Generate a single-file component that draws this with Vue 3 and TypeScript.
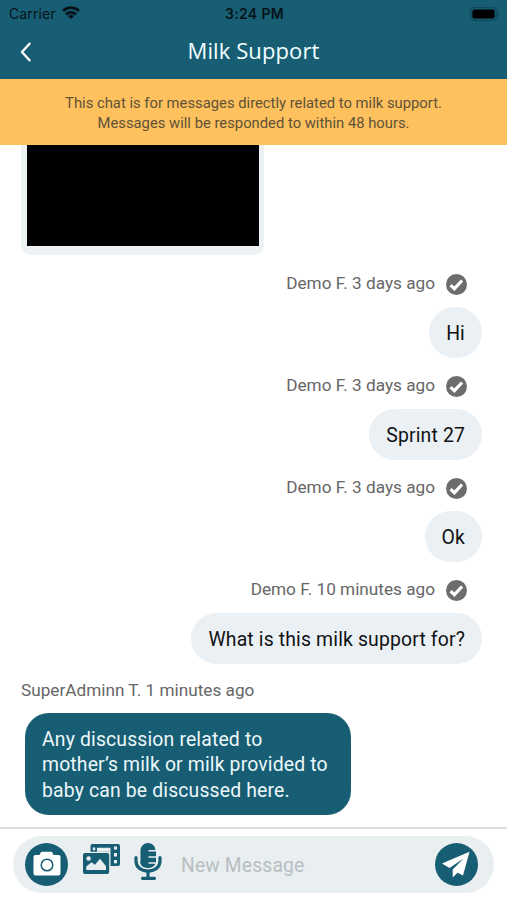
<script setup lang="ts">
interface Message {
  id: number
  author: string
  time: string
  text: string
}

const sent: Message[] = [
  { id: 1, author: 'Demo F.', time: '3 days ago', text: 'Hi' },
  { id: 2, author: 'Demo F.', time: '3 days ago', text: 'Sprint 27' },
  { id: 3, author: 'Demo F.', time: '3 days ago', text: 'Ok' },
  { id: 4, author: 'Demo F.', time: '10 minutes ago', text: 'What is this milk support for?' },
]
</script>

<template>
  <div class="screen">
    <header class="header">
      <div class="status">
        <div class="carrier">
          <span>Carrier</span>
          <svg class="wifi" viewBox="0 0 18 13" width="18" height="13">
            <g fill="none" stroke="#061318" stroke-width="2.8">
              <path d="M1 5a11.3 11.3 0 0 1 16 0" />
              <path d="M4 8.4a7.1 7.1 0 0 1 10 0" />
            </g>
            <path d="M6 10.2a4.4 4.4 0 0 1 6 0L9 13z" fill="#061318" />
          </svg>
        </div>
        <span class="clock">3:24 PM</span>
        <svg class="battery" viewBox="0 0 30 14" width="30" height="14">
          <rect x="0.7" y="0.7" width="25.6" height="12.6" rx="3.5" fill="none" stroke="#10495a" stroke-width="1.2" />
          <rect x="2.4" y="2.4" width="22.2" height="9.2" rx="1.8" fill="#000" />
          <path d="M27.6 4.7c1.8.6 1.8 4 0 4.6z" fill="#10495a" />
        </svg>
      </div>
      <div class="nav">
        <svg class="back" viewBox="0 0 12 20" width="12" height="20">
          <path d="M9.500 1.700 2 10l7.500 8.300" fill="none" stroke="#fff" stroke-width="2.400" stroke-linecap="round" stroke-linejoin="round" />
        </svg>
        <h1 class="title">Milk Support</h1>
      </div>
    </header>

    <div class="notice">
      <p>This chat is for messages directly related to milk support.</p>
      <p>Messages will be responded to within 48 hours.</p>
    </div>

    <main class="chat">
      <div class="media"><div class="video"></div></div>

      <section v-for="m in sent" :key="m.id" class="sent">
        <div class="meta">
          <span>{{ m.author }} {{ m.time }}</span>
          <svg viewBox="0 0 20 20" width="21" height="21">
            <circle cx="10" cy="10" r="10" fill="#6d6d6d" />
            <path d="m4.300 10.500 3.700 3.500 7.300-7.800" fill="none" stroke="#fff" stroke-width="3" />
          </svg>
        </div>
        <div class="bubble">{{ m.text }}</div>
      </section>

      <section class="received">
        <div class="meta"><span>SuperAdminn T. 1 minutes ago</span></div>
        <div class="bubble reply">Any discussion related to<br />mother’s milk or milk provided to<br />baby can be discussed here.</div>
      </section>
    </main>

    <footer class="footer">
      <div class="composer">
        <svg class="camera" viewBox="0 0 43 43" width="43" height="43">
          <circle cx="21.5" cy="21.5" r="21.5" fill="#175e74" />
          <path d="M10.500 12h4l1.200-2.500q.4-.8 1.200-.8h9.200q.8 0 1.200.8l1.200 2.500h5q2 0 2 2v16.500q0 2-2 2h-23q-2 0-2-2v-16.500q0-2 2-2z" fill="#fff" />
          <circle cx="22" cy="22" r="5.800" fill="none" stroke="#175e74" stroke-width="1.500" />
        </svg>
        <svg class="gallery" viewBox="0 0 38 31" width="38" height="31">
          <path d="M9.500 0H35q2 0 2 2v18q0 2-2 2h-7.500V7.800H7.500V2q0-2 2-2z" fill="#175e74" />
          <path d="M14 3.800h13.500v4H14zM9.800 3.500h2.400v2.700H9.800zM31 2.600h3v3h-3zM31 9h3v3.500h-3zM31 16h3v3.200h-3z" fill="#e9eef1" />
          <rect x="0" y="9" width="26.200" height="21" rx="2" fill="#175e74" />
          <circle cx="5.600" cy="14.500" r="2.200" fill="#e9eef1" />
          <path d="M3.300 26v-3.500l5.200-4.300 3.500 2.500 5-6 6 7.500V26z" fill="#e9eef1" />
        </svg>
        <svg class="mic" viewBox="0 0 28 38" width="28" height="38">
          <path d="M6.500 8a7.500 7.500 0 0 1 15-1h-7v1.600h7.500v4.600h-7.500v1.600h7.500v4.400h-7.500v1.600h7a7.500 5.500 0 0 1-15-3z" fill="#175e74" />
          <path d="M2 14.500v3.500c0 6 4.800 10 12 10s12-4 12-10v-3.500M14 28v6M8.500 35.300h12" fill="none" stroke="#175e74" stroke-width="3.200" stroke-linecap="round" />
        </svg>
        <input class="field" type="text" placeholder="New Message" aria-label="New Message" />
        <svg class="send" viewBox="0 0 43 43" width="43" height="43">
          <circle cx="21.500" cy="21.500" r="21.500" fill="#175e74" />
          <path d="M34.500 8.700 7 20.500l7.500 4.600 14-9.600-10.800 11V34.500l4.800-4.700 5.500 2.700z" fill="#fff" />
        </svg>
      </div>
    </footer>
  </div>
</template>

<style>
body {
  margin: 0;
  background: #fff;
}
</style>

<style scoped>
.screen {
  display: flex;
  flex-direction: column;
  width: 507px;
  height: 900px;
  overflow: hidden;
  background: #fff;
  font-family: Roboto, sans-serif;
}
.header {
  flex: none;
  height: 79px;
  background: #175e74;
}
.status {
  display: grid;
  grid-template-columns: 1fr auto 1fr;
  align-items: center;
  height: 28px;
  padding: 0 7px 0 9px;
  font: 14px/28px Inter, sans-serif;
  color: #061318;
}
.carrier {
  display: flex;
  align-items: center;
  gap: 6px;
  letter-spacing: 0.1px;
}
.wifi {
  margin-bottom: 3px;
}
.clock {
  font-weight: 600;
  letter-spacing: 0.35px;
}
.battery {
  justify-self: end;
  margin-bottom: 1px;
}
.nav {
  display: grid;
  grid-template-columns: 60px 1fr 60px;
  align-items: center;
  height: 48px;
}
.back {
  margin-left: 20px;
}
.title {
  margin: 0 0 4px;
  text-align: center;
  font: 400 22px/30px "Open Sans", sans-serif;
  letter-spacing: 0.1px;
  color: #f4ffff;
}
.notice {
  flex: none;
  box-sizing: border-box;
  height: 66px;
  padding-top: 13.500px;
  background: #fec15e;
  text-align: center;
  font-size: 14.800px;
  line-height: 20px;
  color: #5f5138;
}
.notice p {
  margin: 0;
}
.chat {
  flex: 1;
  min-height: 0;
}
.media {
  box-sizing: border-box;
  width: 243px;
  height: 110px;
  margin-left: 21px;
  padding: 0 5px 9px 6px;
  border-radius: 0 0 10px 10px;
  background: #edf2f4;
}
.video {
  height: 101px;
  background: #000;
}
.sent {
  display: flex;
  flex-direction: column;
  align-items: flex-end;
  height: 101.900px;
  padding-right: 25px;
}
.meta {
  display: flex;
  flex: none;
  align-items: center;
  gap: 11px;
  height: 52.400px;
  padding-top: 4.400px;
  box-sizing: border-box;
  font-size: 17.200px;
  color: #666;
}
.sent .meta {
  padding-right: 15px;
}
.meta svg {
  margin-top: 2px;
}
.bubble {
  flex: none;
  box-sizing: border-box;
  height: 50.500px;
  padding: 0 17px;
  border-radius: 26px;
  background: #ebf0f5;
  color: #101214;
  font-size: 19.400px;
  line-height: 53px;
  letter-spacing: 0.15px;
  white-space: nowrap;
}
.received .meta {
  height: 50px;
  padding: 5px 0 0 21px;
}
.reply {
  width: 326px;
  height: 102px;
  margin-left: 25px;
  padding-top: 14px;
  border-radius: 24px;
  background: #175e74;
  color: #edf7fa;
  line-height: 25.600px;
}
.footer {
  flex: none;
  box-sizing: border-box;
  height: 73px;
  padding: 7px 13px 0;
  border-top: 2px solid #dcdedf;
}
.composer {
  display: flex;
  align-items: center;
  box-sizing: border-box;
  height: 57px;
  padding: 0 16px 0 12px;
  border-radius: 29px;
  background: #e9eef1;
}
.composer svg {
  flex: none;
}
.gallery {
  margin: 0 0 11px 15px;
}
.mic {
  margin: 0 0 5px 13px;
}
.field {
  flex: 1;
  min-width: 0;
  height: 40px;
  margin-left: 19px;
  padding: 2px 0 0;
  border: 0;
  outline: 0;
  background: none;
  font: 19.300px Roboto, sans-serif;
  letter-spacing: 0.15px;
}
.field::placeholder {
  color: #b8bec1;
  opacity: 1;
}
</style>
